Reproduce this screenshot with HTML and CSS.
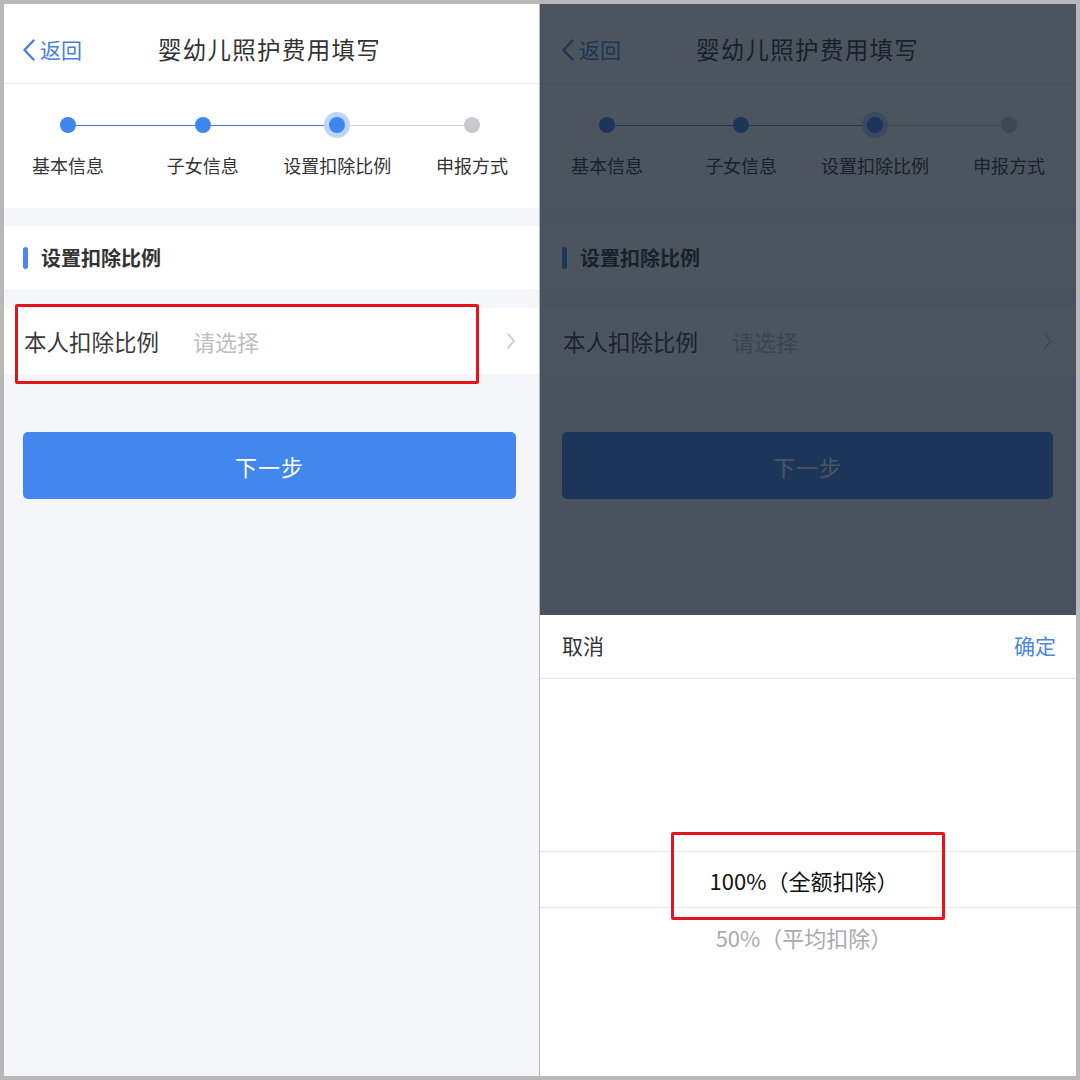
FILE: index.html
```html
<!DOCTYPE html>
<html lang="zh-CN">
<head>
<meta charset="utf-8">
<title>婴幼儿照护费用填写</title>
<link rel="stylesheet" href="styles.css">
</head>
<body>
<div class="frame">
  <div class="phone">
    <header class="nav">
      <a class="back"><svg class="back-icon" viewBox="0 0 14 22" width="14" height="22"><polyline points="11.5,1.5 2.5,11 11.5,20.5" fill="none" stroke="#4a7fd8" stroke-width="2.4" stroke-linecap="round" stroke-linejoin="round"/></svg><span>返回</span></a>
      <h1 class="title">婴幼儿照护费用填写</h1>
    </header>
    <div class="steps">
      <div class="step done"><span class="dot"></span><span class="step-label">基本信息</span></div>
      <div class="link done"></div>
      <div class="step done"><span class="dot"></span><span class="step-label">子女信息</span></div>
      <div class="link done"></div>
      <div class="step active"><span class="dot"></span><span class="step-label">设置扣除比例</span></div>
      <div class="link"></div>
      <div class="step"><span class="dot"></span><span class="step-label">申报方式</span></div>
    </div>
    <div class="section-head"><span class="bar"></span><span class="section-title">设置扣除比例</span></div>
    <div class="field">
      <span class="field-label">本人扣除比例</span>
      <span class="field-value">请选择</span>
      <svg class="chev" viewBox="0 0 10 18" width="10" height="18"><polyline points="2,2 8,9 2,16" fill="none" stroke="#c6c6c8" stroke-width="1.6" stroke-linecap="round" stroke-linejoin="round"/></svg>
    </div>
    <button class="next">下一步</button>
    <div class="mark mark-field"></div>
  </div>
  <div class="phone dim">
    <header class="nav">
      <a class="back"><svg class="back-icon" viewBox="0 0 14 22" width="14" height="22"><polyline points="11.5,1.5 2.5,11 11.5,20.5" fill="none" stroke="#4a7fd8" stroke-width="2.4" stroke-linecap="round" stroke-linejoin="round"/></svg><span>返回</span></a>
      <h1 class="title">婴幼儿照护费用填写</h1>
    </header>
    <div class="steps">
      <div class="step done"><span class="dot"></span><span class="step-label">基本信息</span></div>
      <div class="link done"></div>
      <div class="step done"><span class="dot"></span><span class="step-label">子女信息</span></div>
      <div class="link done"></div>
      <div class="step active"><span class="dot"></span><span class="step-label">设置扣除比例</span></div>
      <div class="link"></div>
      <div class="step"><span class="dot"></span><span class="step-label">申报方式</span></div>
    </div>
    <div class="section-head"><span class="bar"></span><span class="section-title">设置扣除比例</span></div>
    <div class="field">
      <span class="field-label">本人扣除比例</span>
      <span class="field-value">请选择</span>
      <svg class="chev" viewBox="0 0 10 18" width="10" height="18"><polyline points="2,2 8,9 2,16" fill="none" stroke="#c6c6c8" stroke-width="1.6" stroke-linecap="round" stroke-linejoin="round"/></svg>
    </div>
    <button class="next">下一步</button>
    <div class="mask"></div>
    <div class="sheet">
      <div class="sheet-head">
        <span class="cancel">取消</span>
        <span class="confirm">确定</span>
      </div>
      <div class="picker">
        <div class="opt selected">100%（全额扣除）</div>
        <div class="opt">50%（平均扣除）</div>
      </div>
    </div>
    <div class="mark mark-opt"></div>
  </div>
</div>
</body>
</html>
```

FILE: styles.css
```css
* { box-sizing: border-box; }
html, body { margin: 0; padding: 0; }
body {
  width: 1080px;
  height: 1080px;
  background: #bbb8ba;
  font-family: "Noto Sans CJK SC", "Noto Sans", sans-serif;
  overflow: hidden;
}
.frame {
  display: flex;
  gap: 1px;
  padding: 4px;
  height: 1080px;
}
.phone {
  position: relative;
  flex: 0 0 535px;
  height: 1072px;
  background: #f4f6fa;
  overflow: hidden;
  display: flex;
  flex-direction: column;
}
.phone.dim {
  flex-basis: 536px;
  padding-left: 3px;
}

/* nav */
.nav {
  position: relative;
  height: 80px;
  background: #fff;
  border-bottom: 1px solid #e9e9eb;
  display: flex;
  align-items: center;
  justify-content: center;
}
.back {
  position: absolute;
  left: 18px;
  top: 33px;
  display: flex;
  align-items: center;
  gap: 4px;
  color: #4a7fd8;
  font-size: 21px;
  line-height: 24px;
}
.back-icon { display: block; margin-top: 1px; }
.title {
  margin: 10px 0 0 -4px;
  font-size: 23.5px;
  font-weight: 400;
  color: #333;
  letter-spacing: 1.3px;
}

/* steps */
.steps {
  height: 124px;
  background: #fff;
  display: flex;
  padding: 33px 59px 0 56px;
}
.step {
  width: 16px;
  display: flex;
  flex-direction: column;
  align-items: center;
}
.dot {
  width: 16px;
  height: 16px;
  border-radius: 50%;
  background: #c8c9cc;
  flex: none;
}
.step.done .dot { background: #3f86ef; }
.step.active .dot {
  background: #3f86ef;
  box-shadow: 0 0 0 5px #bcd5fa;
}
.step-label {
  margin-top: 20px;
  white-space: nowrap;
  font-size: 18px;
  line-height: 24px;
  color: #333;
}
.link {
  flex: 1;
  height: 1.5px;
  margin-top: 7.5px;
  background: #d2d2d4;
}
.link.done { background: #4a7fd8; }

/* section */
.section-head {
  margin-top: 18px;
  height: 65px;
  background: #fff;
  border-bottom: 1px solid #eceef2;
  display: flex;
  align-items: center;
  padding-left: 19px;
  gap: 13px;
}
.bar {
  width: 5px;
  height: 22px;
  border-radius: 3px;
  background: #4a87ee;
}
.section-title {
  font-size: 20px;
  font-weight: 700;
  color: #333;
  margin-top: -1px;
}

/* field */
.field {
  margin-top: 17px;
  height: 66px;
  background: #fff;
  display: flex;
  align-items: center;
  padding: 0 23px 0 20px;
}
.field-label {
  font-size: 22.5px;
  color: #3a3a3a;
  width: 169px;
}
.field-value {
  flex: 1;
  font-size: 22px;
  color: #bdbdbf;
}
.chev { display: block; }

/* button */
.next {
  margin: 58px 23px 0 19px;
  height: 67px;
  border: 0;
  border-radius: 5px;
  background: #4286f0;
  color: #fff;
  font-family: inherit;
  font-size: 22px;
  letter-spacing: 1px;
}

/* overlay */
.mask {
  position: absolute;
  inset: 0;
  background: rgba(16, 27, 40, 0.75);
}
.sheet {
  position: absolute;
  left: 0;
  right: 0;
  bottom: 0;
  height: 461px;
  background: #fff;
  display: flex;
  flex-direction: column;
}
.sheet-head {
  height: 64px;
  border-bottom: 1px solid #e3e3e5;
  display: flex;
  align-items: center;
  justify-content: space-between;
  padding: 0 20px 4px 22px;
  font-size: 21px;
}
.cancel { color: #333; }
.confirm { color: #4a87e0; }
.picker {
  flex: 1;
  padding-top: 172px;
  display: flex;
  flex-direction: column;
}
.opt {
  height: 57px;
  display: flex;
  align-items: center;
  justify-content: center;
  font-size: 22px;
  color: #ababad;
  padding-right: 8px;
}
.opt.selected {
  color: #111;
  border-top: 1px solid #e8e8ea;
  border-bottom: 1px solid #e8e8ea;
}

/* annotation marks */
.mark {
  position: absolute;
  border: 3px solid #e5141c;
  border-radius: 2px;
}
.mark-field { left: 11px; top: 300px; width: 464px; height: 80px; }
.mark-opt { left: 131px; top: 828px; width: 274px; height: 88px; }
```
